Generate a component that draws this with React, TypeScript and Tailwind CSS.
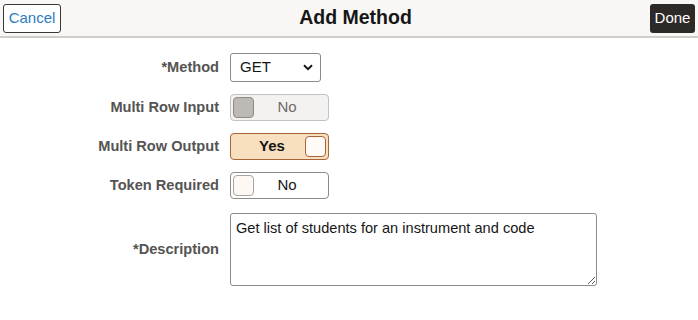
import React from 'react';

const Toggle = ({ state }: { state: 'disabled' | 'on' | 'off' }) => {
  if (state === 'on') {
    return (
      <div className="flex items-center w-[99px] h-[27px] rounded-[4px] border border-[#a9643a] bg-[#f7dfbf] pl-2 pr-[2px]">
        <span className="flex-1 text-center text-[15px] font-bold text-[#161616]">Yes</span>
        <span className="w-[21px] h-[21px] rounded-[4px] border border-[#a9643a] bg-[#fffaf5]" />
      </div>
    );
  }
  const disabled = state === 'disabled';
  return (
    <div
      className={
        disabled
          ? 'flex items-center w-[99px] h-[27px] rounded-[4px] border border-[#c4c1be] bg-[#f3f2f1] pl-[2px] pr-2'
          : 'flex items-center w-[99px] h-[27px] rounded-[4px] border border-[#8d8a87] bg-white pl-[2px] pr-2'
      }
    >
      <span
        className={
          disabled
            ? 'w-[21px] h-[21px] rounded-[4px] border border-[#8d8a87] bg-[#bdb9b5]'
            : 'w-[21px] h-[21px] rounded-[4px] border border-[#a8a5a2] bg-[#fdf8f2]'
        }
      />
      <span className={disabled ? 'flex-1 text-center text-[15px] text-[#6d6b69]' : 'flex-1 text-center text-[15px] text-[#161616]'}>
        No
      </span>
    </div>
  );
};

const Row = ({ label, children, className }: { label: string; children: React.ReactNode; className?: string }) => (
  <div className={`flex items-center ${className ?? ''}`}>
    <label className="w-[219px] text-right text-[14.6px] font-bold text-[#555453]">{label}</label>
    <div className="ml-[11px]">{children}</div>
  </div>
);

export default function App() {
  return (
    <div className="w-[698px] h-[320px] bg-white font-['Liberation_Sans',Arial,sans-serif] text-[#161616]">
      <header className="flex items-center h-[38px] px-[3px] bg-[#f8f7f6] border-b-2 border-[#cfcdcb]">
        <button className="h-[29px] w-[58px] rounded-[3px] border border-[#3a3735] bg-white text-[15px] text-[#2b7cc2]">
          Cancel
        </button>
        <h1 className="flex-1 text-center text-[19.5px] font-bold text-[#161616]">Add Method</h1>
        <button className="h-[29px] w-[45px] rounded-[3px] bg-[#2d2927] text-[15px] text-white">Done</button>
      </header>

      <main className="flex flex-col pt-[15px]">
        <Row label="*Method">
          <div className="flex items-center justify-between w-[91px] h-[29px] rounded-[3px] border border-[#8d8a87] bg-white pl-[9px] pr-[7px]">
            <span className="text-[15px]">GET</span>
            <svg width="10" height="7" viewBox="0 0 10 7" fill="none">
              <path d="M1 1.2L5 5.2L9 1.2" stroke="#161616" strokeWidth="2" />
            </svg>
          </div>
        </Row>
        <Row label="Multi Row Input" className="mt-[12px]">
          <Toggle state="disabled" />
        </Row>
        <Row label="Multi Row Output" className="mt-[12px]">
          <Toggle state="on" />
        </Row>
        <Row label="Token Required" className="mt-[12px]">
          <Toggle state="off" />
        </Row>
        <Row label="*Description" className="mt-[14px]">
          <textarea
            readOnly
            defaultValue="Get list of students for an instrument and code"
            className="block w-[367px] h-[73px] rounded-[3px] border border-[#8d8a87] bg-white px-[5px] py-[4px] text-[14.6px] text-[#161616] outline-none"
          />
        </Row>
      </main>
    </div>
  );
}
